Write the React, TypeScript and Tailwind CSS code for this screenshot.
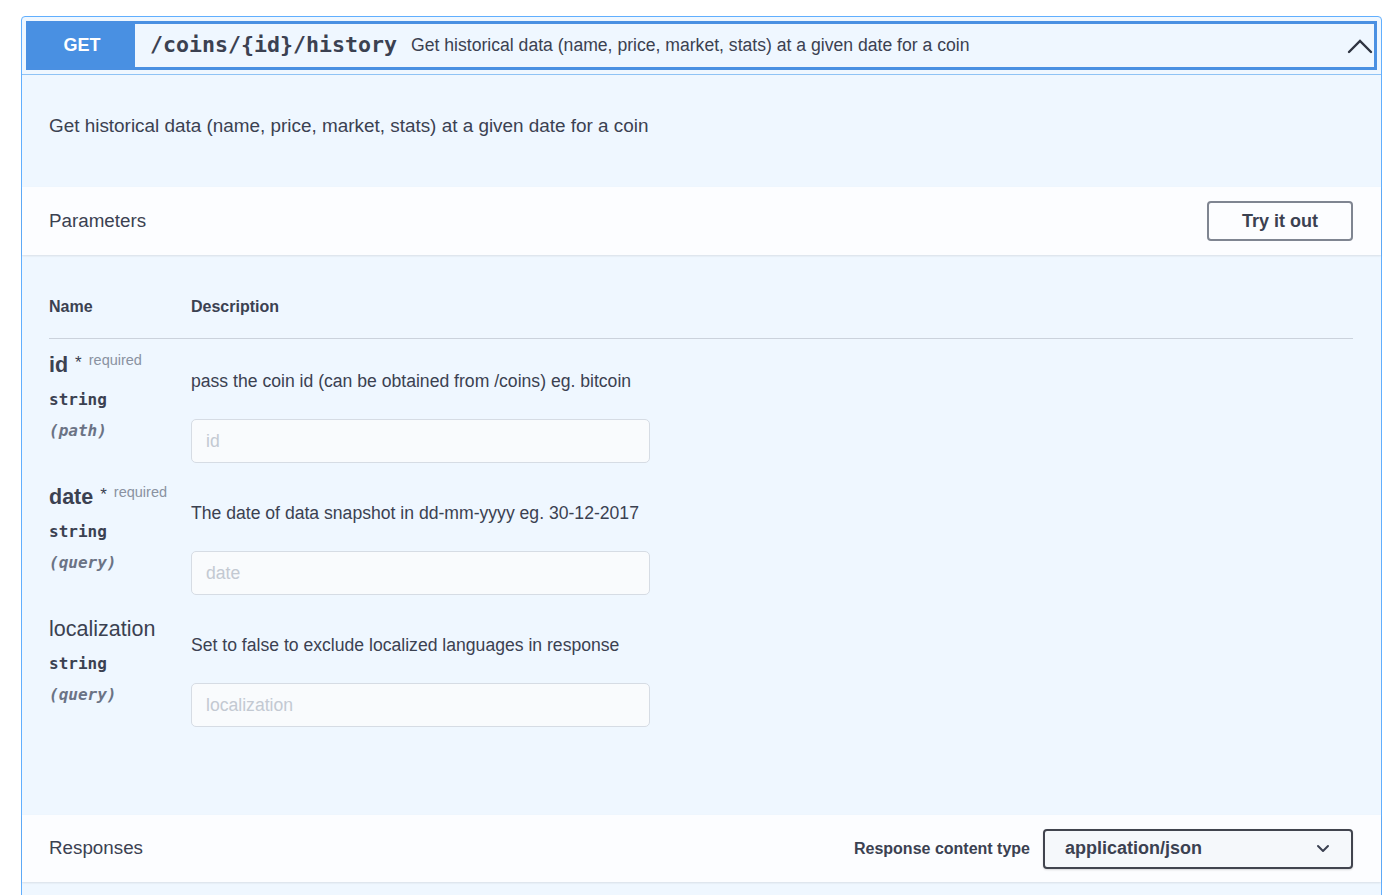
import React from 'react';

type Param = {
  name: string;
  required?: boolean;
  type: string;
  location: string;
  description: string;
};

const params: Param[] = [
  {
    name: 'id',
    required: true,
    type: 'string',
    location: '(path)',
    description: 'pass the coin id (can be obtained from /coins) eg. bitcoin'
  },
  {
    name: 'date',
    required: true,
    type: 'string',
    location: '(query)',
    description: 'The date of data snapshot in dd-mm-yyyy eg. 30-12-2017'
  },
  {
    name: 'localization',
    type: 'string',
    location: '(query)',
    description: 'Set to false to exclude localized languages in response'
  }
];

function ChevronUp() {
  return (
    <svg width="26" height="16" viewBox="0 0 26 16" fill="none" className="mr-[1px]">
      <polyline points="2,14 13,3 24,14" stroke="#2f3441" strokeWidth="2.4" strokeLinecap="round" />
    </svg>
  );
}

function ChevronDown() {
  return (
    <svg width="14" height="9" viewBox="0 0 14 9" fill="none">
      <polyline points="2,2 7,7 12,2" stroke="#3b4151" strokeWidth="2" strokeLinecap="round" strokeLinejoin="round" />
    </svg>
  );
}

function ParamRow({ p }: { p: Param }) {
  return (
    <div className="flex h-[132px]">
      <div className="w-[142px] shrink-0">
        <div className="flex h-[28px] items-start">
          <span className={p.required ? 'text-[21.5px] font-bold leading-[28px]' : 'text-[21.5px] leading-[28px]'}>
            {p.name}
          </span>
          {p.required && (
            <>
              <span className="ml-[7px] text-[17px] leading-[24px]">*</span>
              <span className="ml-[7px] text-[14.5px] leading-[18px] text-[#8a92a1]">required</span>
            </>
          )}
        </div>
        <div className="mt-[11px] h-[20px] font-['DejaVu_Sans_Mono',monospace] text-[16px] font-bold leading-[20px]">
          {p.type}
        </div>
        <div className="mt-[11px] h-[20px] font-['DejaVu_Sans_Mono',monospace] text-[16px] font-bold italic leading-[20px] text-[#6b7385]">
          {p.location}
        </div>
      </div>
      <div className="flex-1">
        <div className="mt-[18px] h-[24px] text-[17.6px] leading-[24px]">{p.description}</div>
        <input
          readOnly
          placeholder={p.name}
          className="mt-[26px] block h-[44px] w-[459px] rounded-[5px] border border-[#d6dce4] bg-[#f9fbfd] px-[14px] text-[17.6px] outline-none placeholder:text-[#c3c9d2]"
        />
      </div>
    </div>
  );
}

export default function App() {
  return (
    <div className="min-h-screen bg-white pl-[21px] pt-4">
      <div className="w-[1361px] rounded-[4px] border border-[#61affe] bg-[#eff7ff] font-['Liberation_Sans',Arial,sans-serif] text-[#3b4151]">
        {/* summary */}
        <div className="border-b border-[#8fc3f5] p-[4px]">
          <div className="flex h-[49px] items-center border-[3px] border-[#4a90e2]">
            <span className="flex h-full w-[106px] items-center justify-center bg-[#4990e2] text-[18px] font-bold text-white">
              GET
            </span>
            <span className="ml-[15px] font-['DejaVu_Sans_Mono',monospace] text-[21.6px] font-bold">
              /coins/{'{id}'}/history
            </span>
            <span className="ml-[14px] text-[17.6px]">
              Get historical data (name, price, market, stats) at a given date for a coin
            </span>
            <span className="ml-auto">
              <ChevronUp />
            </span>
          </div>
        </div>

        {/* description */}
        <div className="flex h-[112px] items-center pb-[10px] pl-[27px] text-[18.9px]">
          Get historical data (name, price, market, stats) at a given date for a coin
        </div>

        {/* parameters header */}
        <div className="flex h-[68px] items-center justify-between bg-white/80 pl-[27px] pr-[28px] shadow-[0_1px_2px_rgba(0,0,0,0.1)]">
          <span className="text-[18.8px]">Parameters</span>
          <button className="h-[40px] w-[146px] rounded-[4px] border-2 border-[#7f8591] text-[18px] font-bold">
            Try it out
          </button>
        </div>

        {/* parameter table */}
        <div className="pb-[68px] pl-[27px] pr-[28px]">
          <div className="flex border-b border-[#3b4151]/20 pb-[21px] pt-[42px] text-[16px] font-bold leading-[20px]">
            <div className="w-[142px]">Name</div>
            <div>Description</div>
          </div>
          <div className="pt-[12px]">
            {params.map((p) => (
              <ParamRow key={p.name} p={p} />
            ))}
          </div>
        </div>

        {/* responses header */}
        <div className="flex h-[67px] items-center justify-between bg-white/80 pl-[27px] pr-[28px] shadow-[0_1px_2px_rgba(0,0,0,0.1)]">
          <span className="text-[18.8px]">Responses</span>
          <div className="flex items-center gap-[13px]">
            <span className="text-[16px] font-bold">Response content type</span>
            <div className="flex h-[40px] w-[310px] items-center justify-between rounded-[4px] border-2 border-[#41444e] bg-[#f5f8fb] pl-[20px] pr-[21px] shadow-[0_1px_2px_rgba(0,0,0,0.15)]">
              <span className="text-[18px] font-bold">application/json</span>
              <ChevronDown />
            </div>
          </div>
        </div>
        <div className="h-[40px]" />
      </div>
    </div>
  );
}
